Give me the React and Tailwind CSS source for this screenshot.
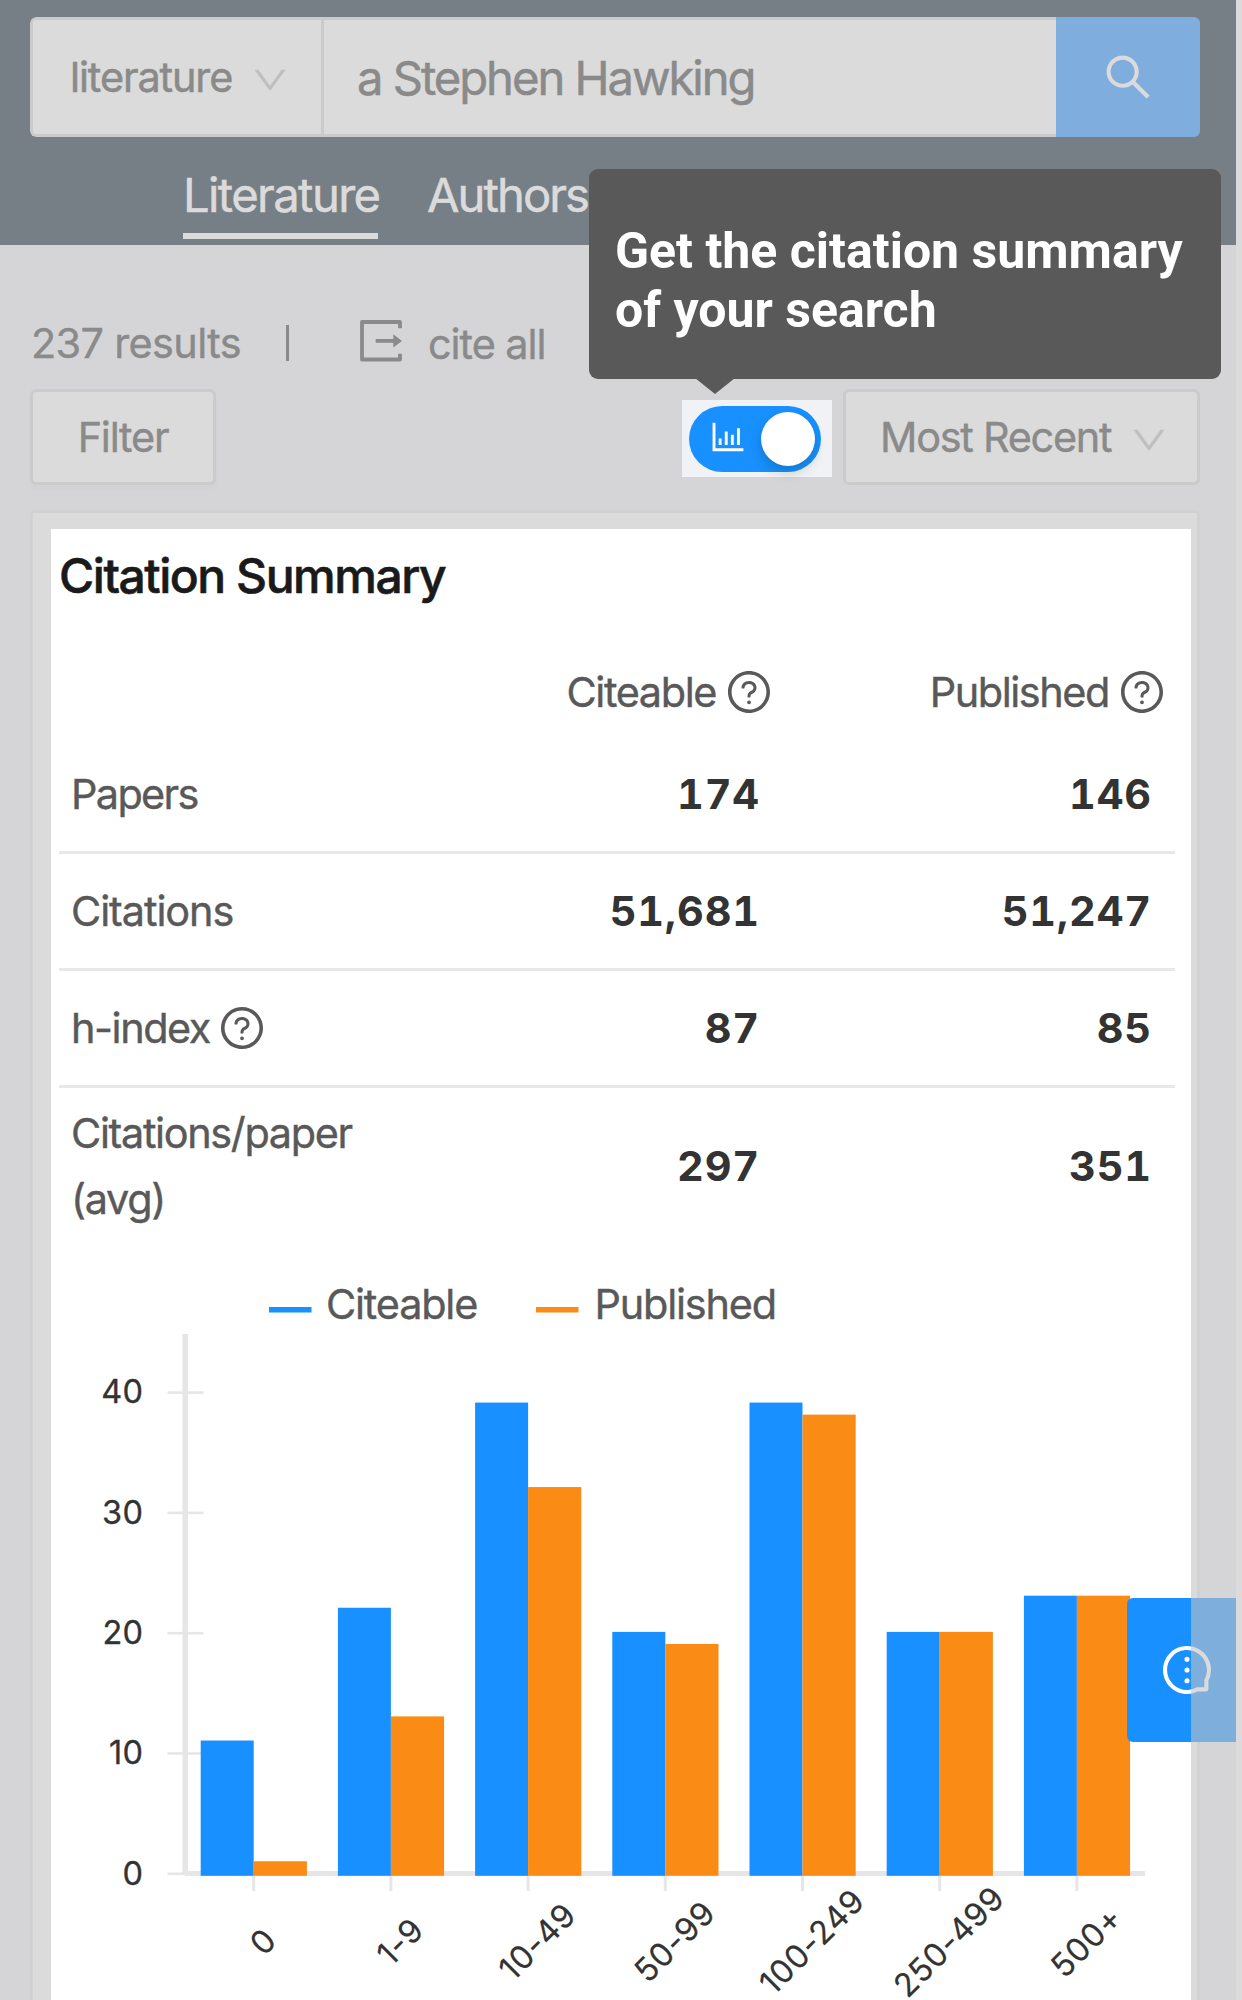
import React from "react";
import {
  AiOutlineSearch,
  AiOutlineDown,
  AiOutlineBarChart,
  AiOutlineQuestionCircle,
  AiOutlineMessage,
} from "react-icons/ai";

const VB = "64 64 896 896";

const BINS = [
  { label: "0", citeable: 11, published: 1 },
  { label: "1-9", citeable: 22, published: 13 },
  { label: "10-49", citeable: 39, published: 32 },
  { label: "50-99", citeable: 20, published: 19 },
  { label: "100-249", citeable: 39, published: 38 },
  { label: "250-499", citeable: 20, published: 20 },
  { label: "500+", citeable: 23, published: 23 },
];

function ExportIcon() {
  return (
    <svg viewBox="0 0 42 42" className="-mt-[4px] ml-[71px] size-[42px]" fill="none">
      <path d="M40 8.200V2H2V39.500H40V33.800" stroke="currentColor" strokeWidth="3.800" strokeLinejoin="round" />
      <path d="M15.700 20.900H34" stroke="currentColor" strokeWidth="3.800" />
      <path d="M33.300 14.200L42 20.900L33.300 27.600Z" fill="currentColor" />
    </svg>
  );
}

function Header() {
  return (
    <header className="h-[245px] bg-[#777f86] pt-[17px]">
      <div className="ml-[30px] flex h-[120px] w-[1170px] overflow-hidden rounded-[6px]">
        <div className="flex w-[1026px] rounded-l-[6px] border-y-[3px] border-l-[3px] border-[#cbcbcb] bg-[#dbdbdb] text-[#8a8a8a]">
          <div className="flex w-[291px] items-center border-r-[3px] border-[#cbcbcb] pl-[37px]">
            <span className="mt-[2px] w-[182px] text-[41.4px] leading-none tracking-[-1.1px] [-webkit-text-stroke:0.5px]">
              literature
            </span>
            <AiOutlineDown viewBox={VB} className="mt-[5px] size-[36px] text-[#bfbfbf]" />
          </div>
          <div className="flex items-center pl-[33px] pt-[2px] text-[47.2px] leading-none tracking-[-2.05px] [-webkit-text-stroke:0.5px]">
            a Stephen Hawking
          </div>
        </div>
        <button className="flex flex-1 items-center justify-center bg-[#7fadde] text-[#dbdbdb]">
          <AiOutlineSearch viewBox={VB} className="size-[48px]" />
        </button>
      </div>
      <nav className="mt-[19px] flex gap-[49px] pl-[183px] text-[47.2px] leading-[77px] text-[#dbdbdb] [-webkit-text-stroke:0.5px]">
        <a className="w-[195px] border-b-[6px] border-[#dbdbdb] tracking-[-1.63px]">Literature</a>
        <a className="tracking-[-1.98px]">Authors</a>
      </nav>
    </header>
  );
}

function Toolbar() {
  return (
    <div className="px-[30px] text-[41.4px] text-[#8a8a8a]">
      <div className="flex h-[60px] items-center leading-[60px]">
        <span className="w-[256px] pl-px tracking-[-0.63px] [-webkit-text-stroke:0.4px]">237 results</span>
        <span className="h-[36px] w-[3px] bg-[#8a8a8a]" />
        <ExportIcon />
        <span className="ml-[26px] mt-[2px] tracking-[-1.05px] [-webkit-text-stroke:0.4px]">cite all</span>
      </div>
      <div className="mt-[16px] flex h-[96px] w-[1170px] items-center">
        <button className="h-[96px] w-[186px] rounded-[6px] border-[3px] border-[#cbcbcb] bg-[#dbdbdb] tracking-[-1.2px] shadow-[0_4px_2px_rgba(200,205,210,0.35)] [-webkit-text-stroke:0.4px]">
          Filter
        </button>
        <div className="ml-auto mt-[3px] flex h-[77px] w-[150px] items-center justify-center bg-[#f0f2f5]">
          <div className="ml-[-4px] flex h-[66px] w-[132px] items-center rounded-full bg-[#1890ff] pl-[21px] text-white">
            <AiOutlineBarChart viewBox={VB} className="-mt-[4px] size-[36px]" />
            <span className="ml-[15px] size-[54px] rounded-full bg-white shadow-[0_6px_12px_rgba(0,35,11,0.2)]" />
          </div>
        </div>
        <div className="ml-[11px] flex h-[96px] w-[357px] items-center rounded-[6px] border-[3px] border-[#cbcbcb] bg-[#dbdbdb] pl-[34px]">
          <span className="w-[251px] tracking-[-1.26px] [-webkit-text-stroke:0.4px]">Most Recent</span>
          <AiOutlineDown viewBox={VB} className="mt-[6px] size-[36px] text-[#bfbfbf]" />
        </div>
      </div>
    </div>
  );
}

function Help() {
  return <AiOutlineQuestionCircle viewBox={VB} className="size-[42px] shrink-0" />;
}

function Num({ children }) {
  return (
    <span className="pr-[23px] text-right font-bold tabular-nums tracking-[0.9px] text-[#333333] [-webkit-text-stroke:0]">
      {children}
    </span>
  );
}

function SummaryTable() {
  const row = "grid h-[117px] grid-cols-[332px_392px_392px] items-center border-b-[3px] border-[#e8e8e8]";
  return (
    <div className="ml-[8px] w-[1116px] text-[41.4px] leading-[66px] text-[#595959] [-webkit-text-stroke:0.4px]">
      <div className="mt-[25px] grid h-[90px] grid-cols-[332px_392px_392px] items-center">
        <span />
        <span className="flex items-center justify-end gap-[12px] pr-[13px] tracking-[-1.4px]">
          Citeable <Help />
        </span>
        <span className="flex items-center justify-end gap-[12px] pr-[12px] tracking-[-1.42px]">
          Published <Help />
        </span>
      </div>
      <div className={row}>
        <span className="pl-[12px] tracking-[-1.65px]">Papers</span>
        <Num>174</Num>
        <Num>146</Num>
      </div>
      <div className={row}>
        <span className="pl-[12px] tracking-[-1.08px]">Citations</span>
        <Num>51,681</Num>
        <Num>51,247</Num>
      </div>
      <div className={row}>
        <span className="flex items-center gap-[11px] pl-[12px] tracking-[-1.45px]">
          h-index <Help />
        </span>
        <Num>87</Num>
        <Num>85</Num>
      </div>
      <div className="grid h-[156px] grid-cols-[332px_392px_392px] items-center">
        <span className="pl-[12px] tracking-[-1.34px]">
          Citations/paper
          <br />
          (avg)
        </span>
        <Num>297</Num>
        <Num>351</Num>
      </div>
    </div>
  );
}

const BASE = 1873.3;
const UNIT = 12.07;

function Chart() {
  return (
    <svg viewBox="51 1244 1140 756" className="block h-[756px] w-[1140px]">
      <rect x="269" y="1307" width="42.5" height="5.5" fill="#1890ff" />
      <rect x="536" y="1307" width="42.5" height="5.5" fill="#fa8c16" />
      <g fontSize="41.4" fill="#595959" stroke="#595959" strokeWidth="0.4">
        <text x="326" y="1319" letterSpacing="-1.2">Citeable</text>
        <text x="594.5" y="1319" letterSpacing="-1.2">Published</text>
      </g>
      <rect x="182.5" y="1334" width="5.5" height="541" fill="#e6e6e8" />
      <rect x="185" y="1871" width="960" height="5" fill="#e6e6e8" />
      {[0, 10, 20, 30, 40].map((v) => (
        <g key={v}>
          <rect x="167.5" y={1872.5 - v * 12.03} width={v ? 36 : 18} height="2.6" fill="#e6e6e8" />
          <text
            x="143.5"
            y={1884.5 - v * 12.03}
            textAnchor="end"
            fontSize="32.5"
            letterSpacing="0.4"
            fill="#333333"
            stroke="#333333"
            strokeWidth="0.3"
          >
            {v}
          </text>
        </g>
      ))}
      {BINS.map((b, i) => {
        const x = 253.7 + i * 137.2;
        return (
          <g key={b.label}>
            <rect x={x - 1.5} y="1876" width="3" height="15" fill="#e6e6e8" />
            <rect x={x - 53} y={BASE - b.citeable * UNIT} width="53" height={b.citeable * UNIT + 2.5} fill="#1890ff" />
            <rect x={x} y={BASE - b.published * UNIT} width="53.2" height={b.published * UNIT + 2.5} fill="#fa8c16" />
            <text
              transform={`translate(${x + 9} 1941.5) rotate(-45)`}
              textAnchor="middle"
              y="11.8"
              fontSize="32.5"
              letterSpacing="0.5"
              fill="#333333"
              stroke="#333333"
              strokeWidth="0.2"
            >
              {b.label}
            </text>
          </g>
        );
      })}
    </svg>
  );
}

export default function App() {
  return (
    <div className="relative h-[2000px] w-[1242px] overflow-hidden bg-[#dbdbdb] font-['Inter',sans-serif]">
      <div className="h-full w-[1236px] bg-[#d5d5d7]">
        <Header />
        <div className="h-[68px]" />
        <Toolbar />
        <section className="ml-[30px] mt-[25px] h-[1500px] w-[1170px] rounded-t-[4px] border-[3px] border-[#d1d1d1] bg-[#dbdbdb] pl-[18px] pt-[16px]">
          <div className="h-full w-[1140px] bg-white">
            <h2 className="pl-[8px] text-[48px] font-medium leading-[93px] tracking-[-1.46px] text-[#1a1a1a] [-webkit-text-stroke:0.6px]">
              Citation Summary
            </h2>
            <SummaryTable />
            <Chart />
          </div>
        </section>
      </div>

      {/* Tour tooltip */}
      <div className="absolute left-[589px] top-[169px] h-[210px] w-[632px] rounded-[9px] bg-[#595959] pl-[26px] pt-[53px] font-['Roboto',sans-serif] text-[50px] font-bold leading-[59px] text-white">
        Get the citation summary
        <br />
        of your search
        <svg viewBox="0 0 40 16" className="absolute left-[106px] top-[209px] h-[16px] w-[40px]">
          <path d="M0 0H40L20 16Z" fill="#595959" />
        </svg>
      </div>

      {/* Feedback button */}
      <div className="absolute left-[1127px] top-[1598px] flex h-[144px] w-[109px] items-center overflow-hidden rounded-l-[6px] bg-[#1890ff] pl-[35.5px] text-white">
        <AiOutlineMessage viewBox={VB} className="size-[48px] -rotate-90" />
        <div className="absolute right-0 top-0 h-full w-[45px] bg-[#c3c3c3]/60" />
      </div>
    </div>
  );
}
